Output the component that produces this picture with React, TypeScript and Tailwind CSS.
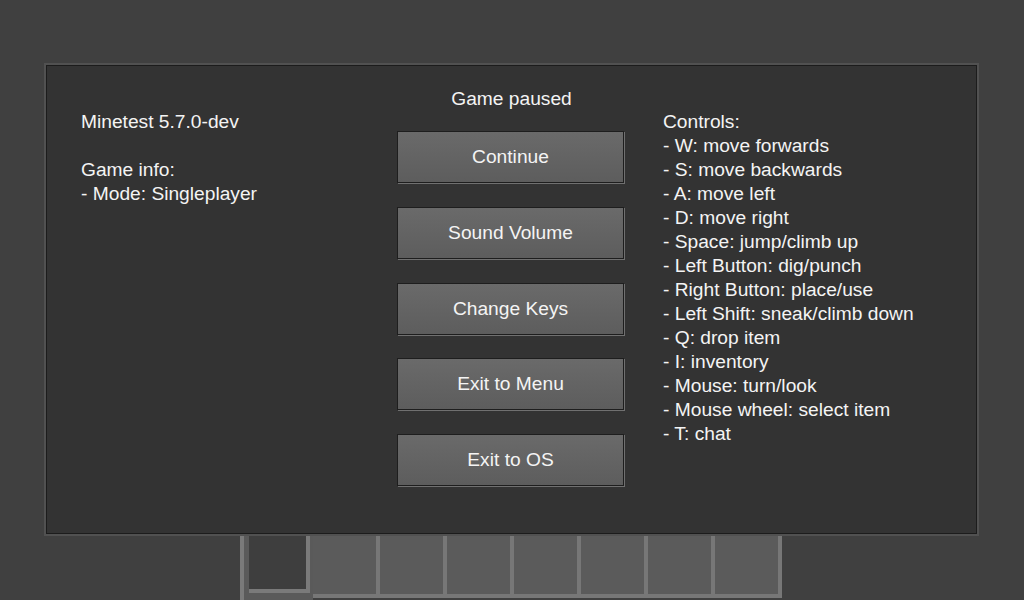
const info = ["Minetest 5.7.0-dev", "", "Game info:", "- Mode: Singleplayer"];

const controls = [
  "Controls:",
  "- W: move forwards",
  "- S: move backwards",
  "- A: move left",
  "- D: move right",
  "- Space: jump/climb up",
  "- Left Button: dig/punch",
  "- Right Button: place/use",
  "- Left Shift: sneak/climb down",
  "- Q: drop item",
  "- I: inventory",
  "- Mouse: turn/look",
  "- Mouse wheel: select item",
  "- T: chat",
];

// spacing in the reference drifts by a pixel around the fourth button
const buttons = [
  { label: "Continue", gap: "" },
  { label: "Sound Volume", gap: "mt-[24px]" },
  { label: "Change Keys", gap: "mt-[24px]" },
  { label: "Exit to Menu", gap: "mt-[23px]" },
  { label: "Exit to OS", gap: "mt-[24px]" },
];

function TextLines({ lines }: { lines: string[] }) {
  return (
    <div className="flex flex-col">
      {lines.map((line, i) => (
        <div key={i} className="h-[24px] whitespace-pre">
          {line || " "}
        </div>
      ))}
    </div>
  );
}

function Hotbar() {
  return (
    <div className="ml-[240px] mt-[-2px] flex">
      {/* selected slot */}
      <div className="flex h-[66px] w-[73px] border-l-4 border-[#7a7a7a] bg-[#5a5a5a] pr-[3px]">
        <div className="ml-[5px] h-[59px] w-[61px] border-r-4 border-b-4 border-[#7a7a7a] bg-[#3e3e3e]" />
      </div>
      {Array.from({ length: 7 }).map((_, i) => (
        <div
          key={i}
          className="h-[64px] w-[67px] border-r-4 border-b-4 border-[#777777] bg-[#5b5b5b]"
        />
      ))}
    </div>
  );
}

export default function App() {
  return (
    <div
      className="h-[600px] w-[1024px] overflow-hidden bg-[#404040] text-[19.2px] leading-[24px] text-[#f4f4f4]"
      style={{ fontFamily: '"Liberation Sans", Arial, sans-serif' }}
    >
      <div className="pt-[63px]">
        <div className="relative z-10 ml-[44px] h-[473px] w-[935px] border-2 border-[#515151]">
          <div className="flex h-full w-full border border-[#1c1c1c] bg-[#333333] pl-[34px]">
            <div className="w-[316px] pt-[44px]">
              <TextLines lines={info} />
            </div>

            <div className="w-[227px] pt-[21px]">
              <div className="h-[24px] pl-[2px] text-center">Game paused</div>
              <div className="mt-[20px] flex flex-col">
                {buttons.map((b) => (
                  <button
                    key={b.label}
                    className={`${b.gap} flex h-[52px] w-[227px] items-center justify-center border border-[#1e1e1e] bg-gradient-to-b from-[#6a6a6a] to-[#5d5d5d] text-[#f4f4f4] shadow-[1px_1px_0_#707070]`}
                  >
                    {b.label}
                  </button>
                ))}
              </div>
            </div>

            <div className="ml-[39px] pt-[44px]">
              <TextLines lines={controls} />
            </div>
          </div>
        </div>
        <Hotbar />
      </div>
    </div>
  );
}
